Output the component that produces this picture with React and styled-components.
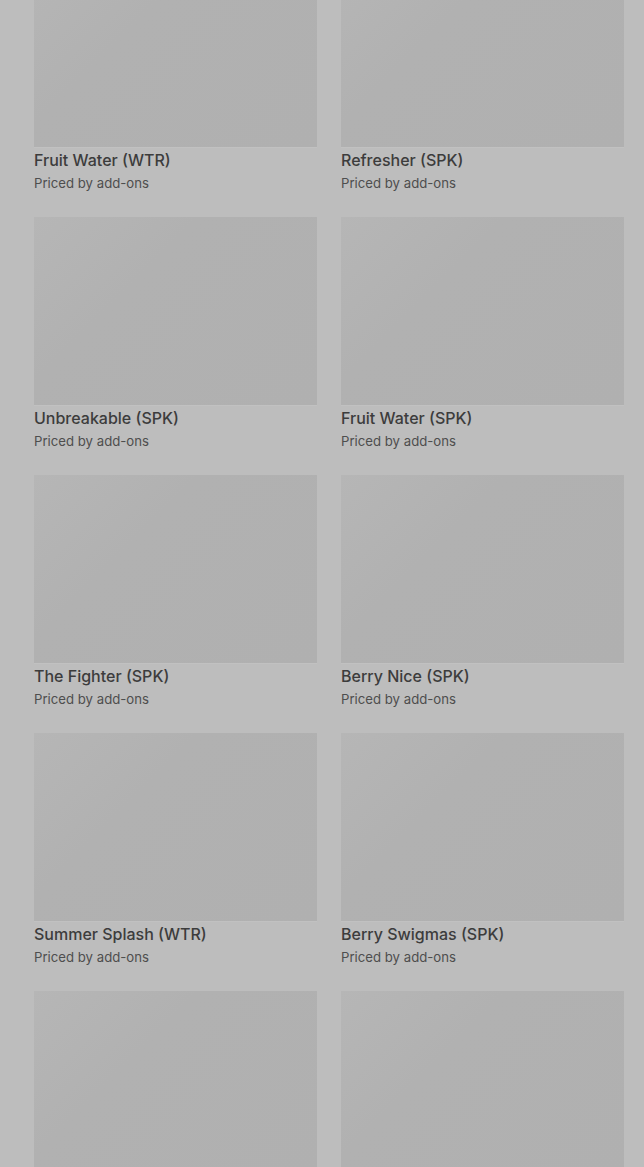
import React from "react";
import styled, { createGlobalStyle } from "styled-components";

const Global = createGlobalStyle`
  html, body { margin: 0; padding: 0; background: #bdbdbd; overflow: hidden; }
  body { font-family: Inter, Roboto, "Noto Sans", Arial, sans-serif; }
`;

const Page = styled.div`
  width: 644px;
  height: 1167px;
  overflow: hidden;
  background: #bdbdbd;
`;

const Grid = styled.div`
  display: grid;
  grid-template-columns: 283px 283px;
  column-gap: 24px;
  row-gap: 24px;
  padding: 0 20px 0 34px;
  margin-top: -41px;
`;

const Card = styled.div`
  display: flex;
  flex-direction: column;
`;

const Thumb = styled.div`
  height: 188px;
  background: linear-gradient(135deg, #b6b6b6 0%, #b1b1b1 35%, #b0b0b0 100%);
  box-shadow: 0 1px 0 #c1c1c1;
`;

const Title = styled.div`
  margin-top: 1px;
  font-size: 16px;
  line-height: 24px;
  font-weight: 500;
  color: #3c3c3c;
`;

const Sub = styled.div`
  margin-top: 1px;
  font-size: 13.2px;
  line-height: 20px;
  color: #4e4e4e;
`;

const items = [
  "Fruit Water (WTR)",
  "Refresher (SPK)",
  "Unbreakable (SPK)",
  "Fruit Water (SPK)",
  "The Fighter (SPK)",
  "Berry Nice (SPK)",
  "Summer Splash (WTR)",
  "Berry Swigmas (SPK)",
  "",
  "",
];

export default function App() {
  return (
    <Page>
      <Global />
      <Grid>
        {items.map((t, i) => (
          <Card key={i}>
            <Thumb />
            {t && <Title>{t}</Title>}
            {t && <Sub>Priced by add-ons</Sub>}
          </Card>
        ))}
      </Grid>
    </Page>
  );
}
